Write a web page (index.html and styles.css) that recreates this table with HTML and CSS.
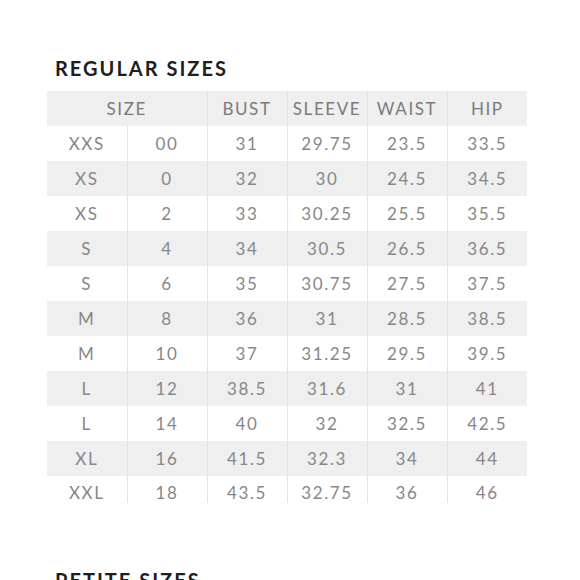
FILE: index.html
```html
<!DOCTYPE html>
<html>
<head>
<meta charset="utf-8">
<link rel="stylesheet" href="styles.css">
</head>
<body>
<div class="page">
  <h2 class="title">REGULAR SIZES</h2>
  <table class="sizes">
    <colgroup><col><col><col><col><col><col></colgroup>
    <tr class="shade head"><td colspan="2">SIZE</td><td>BUST</td><td>SLEEVE</td><td>WAIST</td><td>HIP</td></tr>
    <tr><td>XXS</td><td>00</td><td>31</td><td>29.75</td><td>23.5</td><td>33.5</td></tr>
    <tr class="shade"><td>XS</td><td>0</td><td>32</td><td>30</td><td>24.5</td><td>34.5</td></tr>
    <tr><td>XS</td><td>2</td><td>33</td><td>30.25</td><td>25.5</td><td>35.5</td></tr>
    <tr class="shade"><td>S</td><td>4</td><td>34</td><td>30.5</td><td>26.5</td><td>36.5</td></tr>
    <tr><td>S</td><td>6</td><td>35</td><td>30.75</td><td>27.5</td><td>37.5</td></tr>
    <tr class="shade"><td>M</td><td>8</td><td>36</td><td>31</td><td>28.5</td><td>38.5</td></tr>
    <tr><td>M</td><td>10</td><td>37</td><td>31.25</td><td>29.5</td><td>39.5</td></tr>
    <tr class="shade"><td>L</td><td>12</td><td>38.5</td><td>31.6</td><td>31</td><td>41</td></tr>
    <tr><td>L</td><td>14</td><td>40</td><td>32</td><td>32.5</td><td>42.5</td></tr>
    <tr class="shade"><td>XL</td><td>16</td><td>41.5</td><td>32.3</td><td>34</td><td>44</td></tr>
    <tr class="last"><td>XXL</td><td>18</td><td>43.5</td><td>32.75</td><td>36</td><td>46</td></tr>
  </table>
  <h2 class="title petite">PETITE SIZES</h2>
</div>
</body>
</html>
```
FILE: styles.css
```css
html, body {
  margin: 0;
  padding: 0;
  background: #ffffff;
  overflow: hidden;
}
.page {
  padding: 56px 0 0 47px;
  font-family: "Lato", "Liberation Sans", sans-serif;
}
.title {
  margin: 0 0 11px 8px;
  font-size: 20px;
  line-height: 24px;
  font-weight: 700;
  letter-spacing: 2px;
  color: #1e1e1e;
}
.title.petite {
  margin-top: 65px;
}
.sizes {
  width: 480px;
  border-collapse: collapse;
  border-spacing: 0;
  table-layout: fixed;
}
.sizes td {
  height: 34px;
  padding: 1px 0 0;
  text-align: center;
  vertical-align: middle;
  font-size: 17px;
  line-height: 20px;
  letter-spacing: 1.6px;
  color: #878787;
}
.sizes td + td {
  border-left: 1px solid #e3e3e3;
}
.sizes .shade td {
  background: #efefef;
}
.sizes .head td {
  color: #7a7a7a;
}
.sizes .last td {
  height: 20px;
  padding: 7px 0 0;
  vertical-align: top;
}
```
